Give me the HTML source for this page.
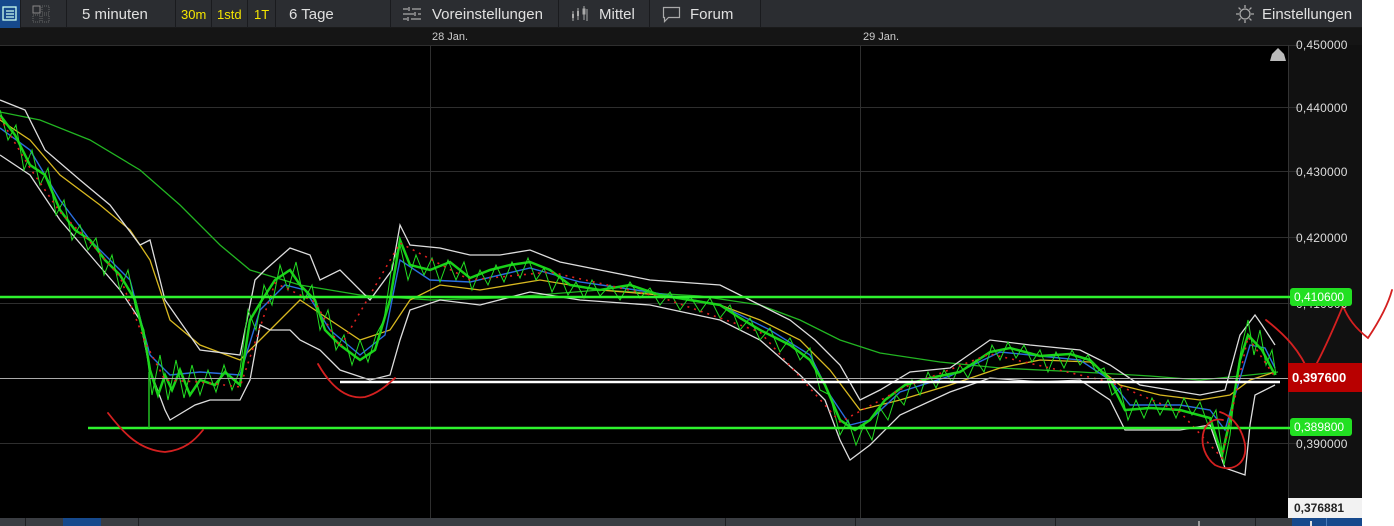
<!DOCTYPE html>
<html><head><meta charset="utf-8"><style>
*{margin:0;padding:0;box-sizing:border-box}
body{width:1394px;height:526px;overflow:hidden;background:#fff;font-family:"Liberation Sans",sans-serif;position:relative}
.tb{position:absolute;left:0;top:0;width:1362px;height:28px;background:#2b2d31;border-bottom:1px solid #1a1a1a}
.t{position:absolute;top:6px;font-size:15px;color:#e0e0e0;white-space:nowrap}
.y{color:#f5e600;font-size:13px;top:7px}
.sep{position:absolute;top:0;width:1px;height:28px;background:#1a1b1e}
.db{position:absolute;left:0;top:28px;width:1362px;height:17px;background:#151515}
.dl{position:absolute;top:31px;font-size:11px;color:#ccc}
.ax{position:absolute;left:1288px;top:45px;width:74px;height:473px;background:#111}
.al{position:absolute;left:1296px;font-size:12px;color:#ddd;letter-spacing:.2px}
.bb{position:absolute;left:0;top:518px;width:1362px;height:8px;background:#3a3d42}
.bs{position:absolute;top:518px;width:1px;height:8px;background:#1e1f22}
</style></head><body>
<div class="tb">
 <div style="position:absolute;left:0;top:0;width:20px;height:28px;background:#16498c"></div>
 <svg style="position:absolute;left:2px;top:6px" width="16" height="16"><rect x="1" y="1" width="13" height="13" fill="none" stroke="#cfe" stroke-width="1.3"/><path d="M4 5h8M4 8h8M4 11h8" stroke="#cfe" stroke-width="1.3"/></svg>
 <div class="sep" style="left:20px"></div>
 <svg style="position:absolute;left:32px;top:5px" width="18" height="18"><rect x="1" y="1" width="7" height="7" fill="none" stroke="#888"/><rect x="10" y="1" width="7" height="7" fill="none" stroke="#666" stroke-dasharray="1 1"/><rect x="1" y="10" width="7" height="7" fill="none" stroke="#666" stroke-dasharray="1 1"/><rect x="10" y="10" width="7" height="7" fill="none" stroke="#666" stroke-dasharray="1 1"/></svg>
 <div class="sep" style="left:66px"></div>
 <div class="t" style="left:82px">5 minuten</div>
 <div class="sep" style="left:175px"></div>
 <div class="t y" style="left:181px">30m</div>
 <div class="sep" style="left:211px"></div>
 <div class="t y" style="left:217px">1std</div>
 <div class="sep" style="left:247px"></div>
 <div class="t y" style="left:254px">1T</div>
 <div class="sep" style="left:275px"></div>
 <div class="t" style="left:289px">6 Tage</div>
 <div class="sep" style="left:390px"></div>
 <svg style="position:absolute;left:402px;top:6px" width="20" height="16"><path d="M1 3h5M10 3h9M7 1v4M1 8h11M16 8h3M13 6v4M1 13h4M9 13h10M6 11v4" stroke="#aaa" stroke-width="1.3"/></svg>
 <div class="t" style="left:432px">Voreinstellungen</div>
 <div class="sep" style="left:558px"></div>
 <svg style="position:absolute;left:570px;top:5px" width="20" height="18"><path d="M3 6v10M8 3v12M14 1v14M17 4v12" stroke="#aaa"/><rect x="2" y="9" width="2" height="4" fill="#aaa"/><rect x="7" y="6" width="2" height="5" fill="#aaa"/><rect x="13" y="4" width="2" height="5" fill="none" stroke="#aaa"/></svg>
 <div class="t" style="left:599px">Mittel</div>
 <div class="sep" style="left:649px"></div>
 <svg style="position:absolute;left:662px;top:6px" width="20" height="17"><path d="M1.5 1.5h16v10h-11l-4 4v-4h-1z" fill="none" stroke="#aaa" stroke-width="1.2"/></svg>
 <div class="t" style="left:690px">Forum</div>
 <div class="sep" style="left:760px"></div>
 <svg style="position:absolute;left:1236px;top:5px" width="18" height="18"><circle cx="9" cy="9" r="5" fill="none" stroke="#aaa" stroke-width="1.3"/><path d="M9 0v3M9 15v3M0 9h3M15 9h3M2.6 2.6l2 2M13.4 13.4l2 2M2.6 15.4l2-2M13.4 4.6l2-2" stroke="#aaa" stroke-width="1.3"/></svg>
 <div class="t" style="left:1262px">Einstellungen</div>
</div>
<div class="db"></div>
<div class="dl" style="left:432px">28 Jan.</div>
<div class="dl" style="left:863px">29 Jan.</div>
<div style="position:absolute;left:0;top:45px;width:1288px;height:473px;background:#000"></div>
<div class="ax"></div>
<svg style="position:absolute;left:0;top:0" width="1394" height="526">
 <g stroke="#2e2e2e" stroke-width="1">
  <path d="M0 45.5H1300M0 107.5H1300M0 171.5H1300M0 237.5H1300M0 303.5H1300M0 443.5H1300"/>
  <path d="M430.5 45V518M860.5 45V518"/>
 </g>
 <path d="M1288.5 45V518" stroke="#333"/>
 <path d="M1270 61h16l-2-7-6-6-6 6z" fill="#bbb"/>
 <polyline fill="none" stroke="#22b522" stroke-width="1.3" points="0,112 40,120 90,140 140,170 180,205 220,245 250,270 300,285 360,295 430,300 500,298 600,290 700,296 760,305 800,320 840,340 880,353 940,362 1000,368 1080,372 1150,376 1200,380 1240,376 1278,372"/>
 <polyline fill="none" stroke="#d8b820" stroke-width="1.3" points="0,120 30,140 60,175 100,205 130,230 150,260 170,320 200,345 240,360 260,340 280,320 300,300 330,320 360,340 390,330 410,300 440,285 480,290 540,280 600,290 660,295 720,305 760,320 800,340 830,370 860,410 900,400 950,385 1000,368 1040,360 1090,362 1120,385 1160,395 1200,400 1230,395 1250,380 1275,372"/>
 <polyline fill="none" stroke="#2a6ee0" stroke-width="1.4" points="0,128 30,150 60,200 90,240 130,280 150,355 170,375 200,372 240,375 260,310 285,285 305,290 330,330 360,355 385,335 400,260 430,280 470,282 530,268 580,282 650,292 720,305 770,330 810,355 830,395 850,425 870,420 900,392 950,376 1000,352 1040,356 1080,360 1110,380 1130,405 1180,405 1210,410 1225,430 1235,395 1250,345 1265,348 1275,368"/>
 <polyline fill="none" stroke="#ddd" stroke-width="1.3" points="0,100 25,110 45,150 80,180 110,205 140,245 150,240 165,300 200,350 240,355 255,280 265,270 290,248 310,255 320,280 340,270 370,300 392,270 400,225 410,245 440,248 470,255 500,255 530,250 560,262 600,270 650,280 720,285 750,300 790,320 815,340 840,365 860,400 880,390 910,372 950,368 990,340 1030,345 1080,350 1110,365 1140,385 1200,395 1225,390 1240,335 1255,315 1262,325 1275,345"/>
 <polyline fill="none" stroke="#ddd" stroke-width="1.3" points="0,155 30,175 60,220 90,255 120,290 140,320 150,370 165,410 170,420 195,405 210,400 240,400 250,380 260,325 270,330 290,330 300,340 320,350 340,370 370,380 390,375 400,340 410,310 440,300 480,305 530,292 580,300 650,305 720,320 760,340 800,375 825,400 840,440 850,460 870,445 900,415 950,392 990,378 1040,382 1080,380 1110,400 1125,430 1180,430 1210,425 1225,468 1245,475 1250,425 1255,395 1275,385"/>
 <polyline fill="none" stroke="#19d219" stroke-width="2.5" points="0,115 15,135 30,165 45,175 60,210 75,230 90,240 105,260 120,275 135,300 145,340 150,370 158,395 165,375 172,390 180,370 190,395 200,380 215,385 225,372 240,385 250,320 262,300 275,280 290,270 300,285 315,300 325,330 340,345 360,360 375,350 390,300 400,240 410,265 430,270 450,262 470,278 490,270 510,265 530,262 550,270 570,285 600,290 630,285 660,295 690,300 720,305 740,318 760,330 790,345 810,360 825,385 840,420 855,430 870,420 885,400 905,385 930,378 960,372 990,352 1010,348 1040,356 1070,354 1090,360 1110,380 1125,410 1150,408 1180,410 1210,418 1222,455 1230,420 1240,360 1248,335 1262,350 1275,375"/>
 <polyline fill="none" stroke="#22dd22" stroke-width="1" points="0,110 8,140 16,125 24,170 32,150 40,185 48,168 56,215 64,200 72,240 80,225 88,250 96,238 104,275 112,255 120,290 128,270 136,310 144,330 152,395 160,355 168,400 176,360 184,398 192,365 200,395 208,370 216,392 224,365 232,390 240,370 248,310 256,330 264,285 272,305 280,265 288,290 296,262 304,300 312,285 320,330 328,310 336,350 344,335 352,365 360,340 368,362 376,335 384,320 392,265 400,245 408,280 416,255 424,275 432,258 440,282 448,260 456,280 464,262 472,290 480,270 488,285 496,265 504,282 512,262 520,278 528,258 536,280 544,268 552,292 560,275 568,295 576,282 584,298 592,280 600,296 610,285 620,300 630,282 640,298 650,288 660,305 670,292 680,310 690,296 700,312 710,298 720,318 730,305 740,330 750,318 760,340 770,328 780,352 790,338 800,360 810,348 820,390 830,395 840,435 848,420 856,445 864,425 872,440 880,408 888,420 896,395 904,405 912,380 920,395 928,372 936,388 944,370 952,382 960,365 968,378 976,360 984,372 992,345 1000,360 1008,342 1016,358 1024,345 1032,362 1040,350 1048,372 1056,352 1064,368 1072,350 1080,365 1088,355 1096,372 1104,368 1112,395 1120,388 1128,420 1136,400 1144,418 1152,398 1160,415 1168,400 1176,418 1184,398 1192,415 1200,402 1208,425 1216,410 1224,465 1230,435 1236,380 1242,345 1248,320 1254,355 1260,330 1266,365 1272,350 1276,375"/>
 <polyline fill="none" stroke="#e02020" stroke-width="1.6" stroke-dasharray="2 5" points="0,118 30,168 60,212 90,242 120,277 145,342 165,380 200,382 240,387 275,283 315,302 340,347 400,243 470,280 550,272 660,297 760,332 840,422 905,387 990,354 1110,382 1180,412 1222,458 1248,337 1275,377"/>
 <path d="M0 378.5H1290" stroke="#aaa" stroke-width="1"/>
 <path d="M340 382H1280" stroke="#fff" stroke-width="2.5"/>
 <path d="M0 297H1290" stroke="#2ef22e" stroke-width="2.5"/>
 <path d="M88 428H1290" stroke="#2ef22e" stroke-width="2.5"/>
 <path d="M149 372V428" stroke="#22c022" stroke-width="1.5"/>
 <g fill="none" stroke="#d42020" stroke-width="1.8" stroke-linecap="round">
  <path d="M108 413C125 435 140 450 165 452C185 450 195 440 203 430"/>
  <path d="M318 364C330 385 345 400 365 397C380 393 390 382 395 378"/>
  <path d="M1223 420C1200 415 1195 450 1215 465C1235 475 1250 460 1244 440C1240 425 1230 415 1220 412"/>
  <path d="M1266 320C1285 335 1300 350 1310 375C1320 360 1335 325 1343 306C1348 318 1355 328 1368 338C1380 320 1388 305 1392 290"/>
 </g>
</svg>
<div class="al" style="top:38px">0,450000</div>
<div class="al" style="top:101px">0,440000</div>
<div class="al" style="top:165px">0,430000</div>
<div class="al" style="top:231px">0,420000</div>
<div class="al" style="top:297px">0,410000</div>
<div class="al" style="top:437px">0,390000</div>
<div style="position:absolute;left:1290px;top:288px;width:62px;height:18px;background:#22e022;border-radius:3px;color:#fff;font-size:12px;padding:2px 0 0 4px">0,410600</div>
<div style="position:absolute;left:1288px;top:363px;width:74px;height:29px;background:#b80000;color:#fff;font-size:13px;font-weight:bold;padding:7px 0 0 4px">0,397600</div>
<div style="position:absolute;left:1290px;top:418px;width:62px;height:18px;background:#22e022;border-radius:3px;color:#fff;font-size:12px;padding:2px 0 0 4px">0,389800</div>
<div style="position:absolute;left:1288px;top:498px;width:74px;height:20px;background:#f2f2f2;color:#222;font-size:12px;font-weight:bold;padding:3px 0 0 6px">0,376881</div>
<div class="bb"></div>
<div style="position:absolute;left:63px;top:518px;width:38px;height:8px;background:#16498c"></div>
<div style="position:absolute;left:1292px;top:518px;width:70px;height:8px;background:#16498c"></div>
<div class="bs" style="left:25px"></div><div class="bs" style="left:138px"></div><div class="bs" style="left:725px"></div><div class="bs" style="left:855px"></div><div class="bs" style="left:1055px"></div><div class="bs" style="left:1255px"></div><div class="bs" style="left:1326px;background:#4a7ab8"></div>
<div style="position:absolute;left:1198px;top:521px;width:2px;height:5px;background:#999"></div>
<div style="position:absolute;left:1310px;top:521px;width:2px;height:5px;background:#ddd"></div>
</body></html>
